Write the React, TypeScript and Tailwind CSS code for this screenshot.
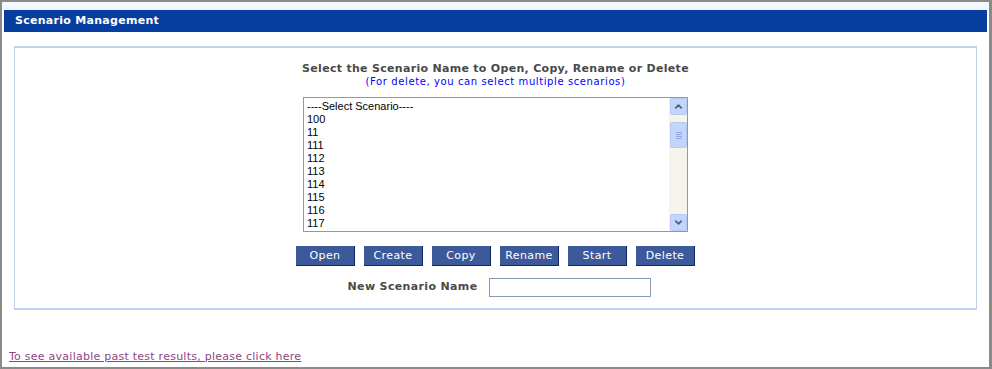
import { ChevronUp, ChevronDown } from 'lucide-react';

const scenarios = ['----Select Scenario----', '100', '11', '111', '112', '113', '114', '115', '116', '117', '12'];
const actions = ['Open', 'Create', 'Copy', 'Rename', 'Start', 'Delete'];

function ScrollBar() {
  return (
    <div className="flex w-[18px] flex-col bg-[#f4f3ec] pl-[1px]">
      {/* up arrow */}
      <div className="flex h-[17px] items-center justify-center rounded-[2px] border border-[#b7c9f3] bg-[#c4d5fc]">
        <ChevronUp className="h-[11px] w-[11px] text-[#4d6185]" strokeWidth={4} />
      </div>
      {/* thumb */}
      <div className="mt-[7px] flex h-[26px] flex-col items-center justify-center gap-[1px] rounded-[2px] border border-[#b7c9f3] bg-[#c4d5fc]">
        <div className="h-[1px] w-[6px] bg-[#8fa8e4]" />
        <div className="h-[1px] w-[6px] bg-[#8fa8e4]" />
        <div className="h-[1px] w-[6px] bg-[#8fa8e4]" />
        <div className="h-[1px] w-[6px] bg-[#8fa8e4]" />
      </div>
      <div className="flex-1" />
      {/* down arrow */}
      <div className="flex h-[17px] items-center justify-center rounded-[2px] border border-[#b7c9f3] bg-[#c4d5fc]">
        <ChevronDown className="h-[11px] w-[11px] text-[#4d6185]" strokeWidth={4} />
      </div>
    </div>
  );
}

export default function App() {
  return (
    <div className="flex h-[369px] w-[992px] flex-col border-2 border-r-[3px] border-[#8a8a8a] bg-white font-['DejaVu_Sans',Verdana,sans-serif]">
      <div className="h-[8px] bg-[#f3f8ff]" />

      {/* Header bar */}
      <div className="mx-[2px] flex h-[22px] items-center bg-[#063d9e] pl-[11px] text-[11px] font-bold tracking-[0.28px] text-white">
        Scenario Management
      </div>

      {/* Main panel */}
      <div className="mx-[12px] mt-[14px] flex h-[264px] flex-col items-center border border-y-2 border-[#bfd3ee] pt-[14px]">
        <div className="text-[11px] leading-[13px] font-bold tracking-[0.3px] text-[#4a4a4a]">
          Select the Scenario Name to Open, Copy, Rename or Delete
        </div>
        <div className="text-[10px] leading-[13px] tracking-[0.6px] text-[#0000ff]">
          (For delete, you can select multiple scenarios)
        </div>

        {/* Scenario list box */}
        <div className="mt-[9px] flex h-[135px] w-[385px] border border-[#7f9db9] bg-white">
          <div className="flex-1 overflow-hidden pl-[3px] pt-[2px] font-['Liberation_Sans',Arial,sans-serif] text-[11px] leading-[13px] text-black">
            {scenarios.map((s) => (
              <div key={s}>{s}</div>
            ))}
          </div>
          <ScrollBar />
        </div>

        {/* Action buttons */}
        <div className="mt-[14px] flex gap-[9px]">
          {actions.map((a) => (
            <button
              key={a}
              className="flex h-[20px] w-[59px] items-center justify-center border-r border-b border-[#14275a] bg-[#3c5a9a] pt-[2px] text-[11px] tracking-[0.4px] text-white"
            >
              {a}
            </button>
          ))}
        </div>

        {/* New scenario name */}
        <div className="mt-[12px] ml-[8px] flex items-center gap-[12px]">
          <span className="text-[11px] font-bold tracking-[0.35px] text-[#4a4a4a]">New Scenario Name</span>
          <input className="h-[19px] w-[162px] border border-[#7f9db9] bg-white outline-none" />
        </div>
      </div>

      {/* Past results link */}
      <div className="mt-auto pl-[7px]">
        <a href="#" className="text-[11px] leading-[13px] tracking-[0.25px] text-[#8e4585] underline">
          To see available past test results, please click here
        </a>
      </div>
    </div>
  );
}
